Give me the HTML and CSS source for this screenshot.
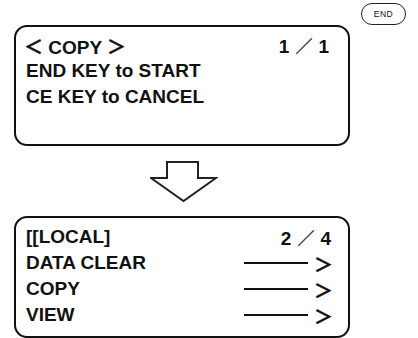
FILE: index.html
```html
<!DOCTYPE html>
<html lang="en">
<head>
    <meta charset="UTF-8">
    <title>LCD copy</title>
    <link rel="stylesheet" href="styles.css">
</head>
<body>
    <div class="page">
        <div class="keyrow">
            <span class="endkey">END</span>
        </div>
        <div class="panel top">
            <div class="row"><span><i class="ang">＜</i> COPY <i class="ang">＞</i></span><span class="page-no">1<i>／</i>1</span></div>
            <div class="row"><span>END KEY to START</span></div>
            <div class="row"><span>CE KEY to CANCEL</span></div>
        </div>
        <div class="arrowbox">
            <svg width="68" height="42" viewBox="0 0 68 42">
                <path d="M17 1 H48 V17 H66 L33.5 40 L1 17 H17 Z" fill="#fff" stroke="#222" stroke-width="2" stroke-linejoin="miter"/>
            </svg>
        </div>
        <div class="panel bottom">
            <div class="row"><span>[[LOCAL]</span><span class="page-no">2<i>／</i>4</span></div>
            <div class="row"><span>DATA CLEAR</span><span class="go"><b class="dash"></b><i class="ang">＞</i></span></div>
            <div class="row"><span>COPY</span><span class="go"><b class="dash"></b><i class="ang">＞</i></span></div>
            <div class="row"><span>VIEW</span><span class="go"><b class="dash"></b><i class="ang">＞</i></span></div>
        </div>
    </div>
</body>
</html>
```

FILE: styles.css
```css
body{
    margin:0;
    background:#fff;
    font-family:"Liberation Sans", Arial, sans-serif;
    color:#111;
}
.page{
    width:392px;
    padding-left:14px;
}
.keyrow{
    display:flex;
    justify-content:flex-end;
    padding-top:3px;
    height:22px;
}
.endkey{
    width:43px;
    height:20px;
    border:1px solid #222;
    border-radius:11px;
    font-size:8.5px;
    letter-spacing:0.5px;
    display:flex;
    align-items:center;
    justify-content:center;
}
.panel{
    width:336px;
    border:2px solid #111;
    border-radius:13px;
    padding:6px 0 0 10px;
    box-sizing:border-box;
    font-weight:bold;
    font-size:19px;
}
.top{
    height:121px;
}
.bottom{
    height:122px;
    padding-top:6px;
}
.row{
    display:flex;
    justify-content:space-between;
    align-items:center;
    height:25.5px;
    padding-right:19px;
}
.bottom .row{
    height:26px;
    padding-right:15px;
}
.bottom .page-no{
    margin-right:2px;
}
.ang{
    font-style:normal;
    font-family:"Noto Sans CJK JP", sans-serif;
    font-size:19px;
    -webkit-text-stroke:0.4px #111;
}
.top .ang:first-child{
    margin-left:-2px;
}
.page-no i{
    font-style:normal;
    font-weight:normal;
    font-family:"Noto Sans CJK JP", sans-serif;
    font-size:17px;
    margin:0 6px;
    color:#111;
    -webkit-text-stroke:0.3px #111;
}
.go{
    display:flex;
    align-items:center;
}
.dash{
    display:block;
    width:64px;
    height:2px;
    background:#111;
    margin-right:6px;
}
.arrowbox{
    display:flex;
    justify-content:center;
    width:340px;
    padding:15px 0 13px;
}
.arrowbox svg{
    display:block;
}
```
